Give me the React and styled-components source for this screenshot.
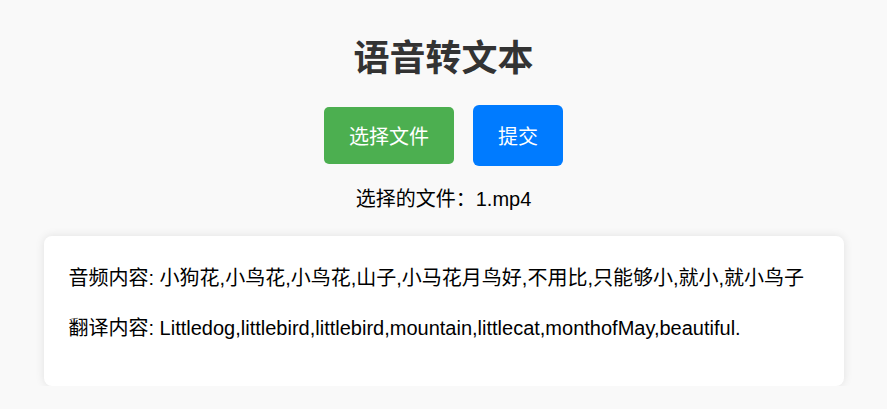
import React from "react";
import styled, { createGlobalStyle } from "styled-components";

const GlobalStyle = createGlobalStyle`
  body {
    margin: 0;
    background: #f9f9f9;
    font-family: "Liberation Sans", "Noto Sans CJK SC", sans-serif;
    color: #000;
  }
`;

export default function App() {
  return (
    <>
      <GlobalStyle />
      <StWrapper>
        <StTitle>语音转文本</StTitle>
        <StActions>
          <StUpload>选择文件</StUpload>
          <StSubmit>提交</StSubmit>
        </StActions>
        <StFileName>选择的文件：1.mp4</StFileName>
        <StResult>
          <p>音频内容: 小狗花,小鸟花,小鸟花,山子,小马花月鸟好,不用比,只能够小,就小,就小鸟子</p>
          <p>翻译内容: Littledog,littlebird,littlebird,mountain,littlecat,monthofMay,beautiful.</p>
        </StResult>
      </StWrapper>
    </>
  );
}

const StWrapper = styled.div`
  max-width: 800px;
  margin: 0 auto;
  padding-top: 37px;
  display: flex;
  flex-direction: column;
  align-items: center;
`;

const StTitle = styled.h1`
  margin: 0;
  font-size: 36px;
  line-height: 43px;
  font-weight: bold;
  color: #333;
`;

const StActions = styled.div`
  display: flex;
  align-items: center;
  gap: 19px;
  margin-top: 25px;
  height: 61px;
`;

const StUpload = styled.label`
  display: flex;
  align-items: center;
  justify-content: center;
  width: 130px;
  height: 57px;
  border-radius: 5px;
  background: #4caf50;
  color: #fff;
  font-size: 20px;
  cursor: pointer;
`;

const StSubmit = styled.button`
  width: 90px;
  height: 61px;
  border: none;
  border-radius: 6px;
  background: #007bff;
  color: #fff;
  font-family: inherit;
  font-size: 20px;
  cursor: pointer;
`;

const StFileName = styled.p`
  margin: 22px 0 0;
  font-size: 20px;
  line-height: 23px;
`;

const StResult = styled.div`
  align-self: stretch;
  margin-top: 25px;
  padding: 27px 25px 3px;
  background: #fff;
  border-radius: 8px;
  box-shadow: 0 0 10px rgba(0, 0, 0, 0.1);
  p {
    margin: 0 0 20px;
    font-size: 20px;
    line-height: 30px;
  }
  p:last-child {
    margin-bottom: 40px;
  }
`;
